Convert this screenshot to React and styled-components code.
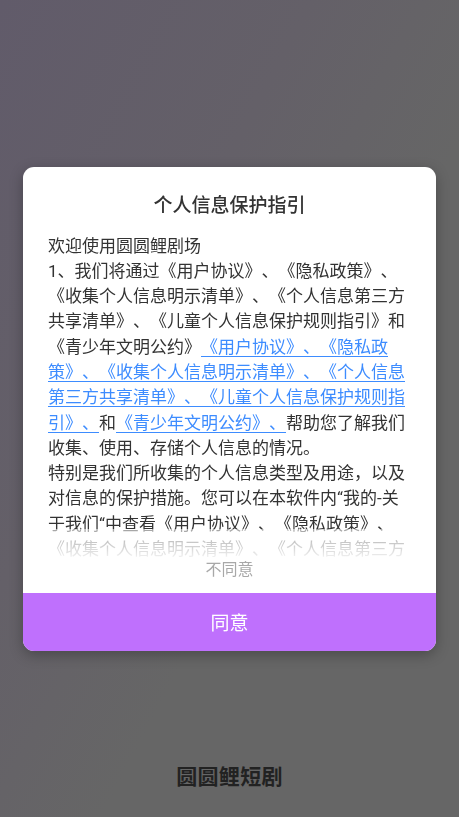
import React from 'react';
import styled, { createGlobalStyle } from 'styled-components';

const GlobalStyle = createGlobalStyle`
  html, body {
    margin: 0;
    padding: 0;
  }
  body {
    font-family: Roboto, "Noto Sans CJK SC", sans-serif;
  }
`;

const Splash = styled.div`
  height: 817px;
  display: flex;
  flex-direction: column;
  justify-content: flex-end;
  align-items: center;
  background: linear-gradient(118deg, #615b6a 0%, #646068 35%, #666666 60%, #666666 100%);
`;

const Brand = styled.div`
  font-size: 21px;
  font-weight: 700;
  color: #222;
  line-height: 30px;
  margin-bottom: 25px;
  letter-spacing: 0.3px;
`;

const Overlay = styled.div`
  position: fixed;
  inset: 0;
  display: flex;
  align-items: center;
  justify-content: center;
`;

const Dialog = styled.div`
  width: 413px;
  background: #fff;
  border-radius: 11px;
  overflow: hidden;
  box-shadow: 0 4px 14px rgba(0, 0, 0, 0.28);
  display: flex;
  flex-direction: column;
`;

const Title = styled.h2`
  margin: 0;
  padding-top: 27px;
  font-size: 19px;
  line-height: 24px;
  font-weight: 500;
  color: #333;
  text-align: center;
`;

const Content = styled.div`
  position: relative;
  margin: 16px 25px 0;
  height: 325px;
  overflow: hidden;
  font-size: 17px;
  line-height: 25.3px;
  color: #333;
  text-spacing-trim: space-all;

  &::after {
    content: "";
    position: absolute;
    left: 0;
    right: 0;
    bottom: 0;
    height: 30px;
    background: linear-gradient(to bottom, rgba(255, 255, 255, 0.55), rgba(255, 255, 255, 0.95));
  }
`;

const Para = styled.p`
  margin: 0;
`;

const Link = styled.a`
  color: #3d8cff;
  text-decoration: underline;
  text-underline-offset: 3px;
  text-decoration-thickness: 1px;
`;

const Disagree = styled.button`
  border: 0;
  background: none;
  padding: 0;
  margin: 0 0 12px;
  font-family: inherit;
  font-size: 16px;
  line-height: 22px;
  color: #a8a8a8;
  text-align: center;
`;

const Agree = styled.button`
  border: 0;
  height: 58px;
  background: #bf70fd;
  color: #fff;
  font-family: inherit;
  font-size: 19px;
  text-align: center;
`;

export default function App() {
  return (
    <>
      <GlobalStyle />
      <Splash>
        <Brand>圆圆鲤短剧</Brand>
      </Splash>
      <Overlay>
        <Dialog>
          <Title>个人信息保护指引</Title>
          <Content lang="zh-CN">
            <Para>欢迎使用圆圆鲤剧场</Para>
            <Para>
              1、我们将通过《用户协议》、《隐私政策》、《收集个人信息明示清单》、《个人信息第三方共享清单》、《儿童个人信息保护规则指引》和《青少年文明公约》
              <Link>《用户协议》、《隐私政策》、《收集个人信息明示清单》、《个人信息第三方共享清单》、《儿童个人信息保护规则指引》、</Link>
              和
              <Link>《青少年文明公约》、</Link>
              帮助您了解我们收集、使用、存储个人信息的情况。
            </Para>
            <Para>
              特别是我们所收集的个人信息类型及用途，以及对信息的保护措施。您可以在本软件内“我的-关于我们“中查看《用户协议》、《隐私政策》、《收集个人信息明示清单》、《个人信息第三方共享清单》、《儿童个人信息保护规则指引》和《青少年文明公约》。
            </Para>
          </Content>
          <Disagree>不同意</Disagree>
          <Agree>同意</Agree>
        </Dialog>
      </Overlay>
    </>
  );
}
